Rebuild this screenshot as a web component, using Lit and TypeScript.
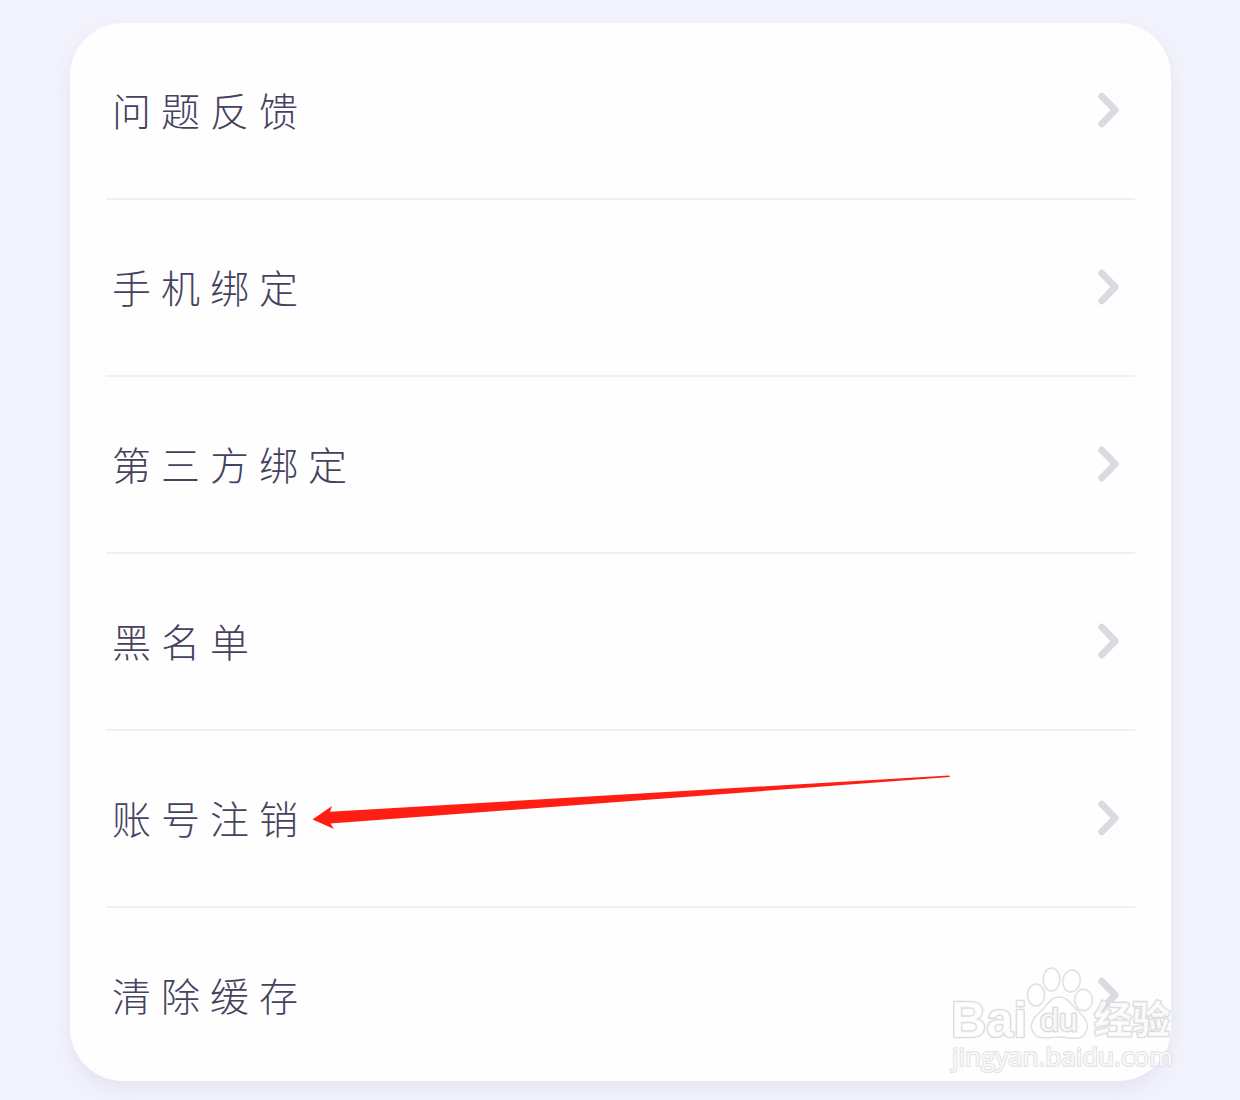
import { LitElement, html, css } from "lit";
import { customElement, property } from "lit/decorators.js";

@customElement("settings-row")
class SettingsRow extends LitElement {
  @property() label = "";

  static styles = css`
    :host {
      display: flex;
      align-items: center;
      justify-content: space-between;
      height: 175px;
      border-bottom: 2px solid #f0f0f2;
    }
    :host(:last-child) {
      border-bottom-color: transparent;
    }
    .label {
      padding: 0 0 4px 6px;
      font-family: "Noto Sans CJK SC", sans-serif;
      font-size: 39px;
      font-weight: 300;
      line-height: 58px;
      letter-spacing: 10px;
      color: #46415f;
      white-space: nowrap;
    }
    .chevron {
      display: block;
      width: 24px;
      height: 38px;
      margin: 0 14px 1px 0;
    }
  `;

  render() {
    return html`
      <span class="label">${this.label}</span>
      <svg class="chevron" viewBox="0 0 24 38" fill="none" stroke="#dadae2" stroke-width="6.8" stroke-linecap="round" stroke-linejoin="round">
        <path d="M4.7 5.2 L18.2 19 L4.7 32.8" />
      </svg>
    `;
  }
}

@customElement("app-root")
class AppRoot extends LitElement {
  private items = ["问题反馈", "手机绑定", "第三方绑定", "黑名单", "账号注销", "清除缓存"];

  static styles = css`
    :host {
      display: block;
    }
    .page {
      position: relative;
      box-sizing: border-box;
      height: 1100px;
      padding: 23px 69px 0 70px;
      overflow: hidden;
      background: #f2f3fc;
    }
    .card {
      box-sizing: border-box;
      height: 1058px;
      padding: 0 36px;
      border-radius: 53px;
      background: #fefefe;
      box-shadow: 0 8px 20px rgba(80, 80, 130, 0.09);
    }
    .arrow {
      position: absolute;
      left: 300px;
      top: 760px;
    }
    .watermark {
      position: absolute;
      left: 930px;
      top: 950px;
    }
    .latin {
      font-family: "Liberation Sans", sans-serif;
    }
    .han {
      font-family: "Noto Sans CJK SC", sans-serif;
      font-weight: 700;
    }
    .url {
      font-family: "Open Sans", sans-serif;
    }
  `;

  render() {
    return html`
      <main class="page">
        <section class="card">
          ${this.items.map((item) => html`<settings-row .label=${item}></settings-row>`)}
        </section>
        <svg class="arrow" width="660" height="80" viewBox="0 0 660 80">
          <path fill="#ff1e14" d="M12.5 59.5 L32 46 L30 51.8 L649 15.5 L650 17 L30.5 63.5 L34 69 Z" />
        </svg>
        <svg class="watermark" width="270" height="150" viewBox="0 0 270 150">
          <g fill="#ffffff" fill-opacity="0.8" stroke="#dfdfdf" stroke-width="1.5" stroke-linejoin="round">
            <ellipse cx="106" cy="45" rx="8.5" ry="11" />
            <ellipse cx="121.5" cy="29.5" rx="8.3" ry="11.5" />
            <ellipse cx="141.5" cy="31" rx="8.7" ry="11" transform="rotate(8 141.5 31)" />
            <ellipse cx="153.5" cy="50" rx="8.8" ry="10.8" />
            <path d="M129 47 C119 47 117 57 108 64 C101 70 100 77 103 82 C108 91 119 87 130 87 C141 87 151 92 156 82 C160 74 155 68 149 62 C141 55 138 47 129 47 Z" />
          </g>
          <g fill="#ffffff" fill-opacity="0.8" stroke="#dcdcdc" paint-order="stroke" stroke-linejoin="round">
            <text class="latin" x="21" y="87" font-size="50" font-weight="700" stroke-width="2.6" textLength="76" lengthAdjust="spacingAndGlyphs">Bai</text>
            <text class="latin" x="110" y="81" font-size="31" font-weight="400" stroke-width="2.8" textLength="38" lengthAdjust="spacingAndGlyphs">du</text>
            <text class="han" x="164" y="83" font-size="38" stroke-width="2.6" textLength="76" lengthAdjust="spacingAndGlyphs">经验</text>
            <text class="url" x="22" y="116" font-size="25" stroke-width="2" stroke="#e2e2e4" textLength="221" lengthAdjust="spacingAndGlyphs">jingyan.baidu.com</text>
          </g>
        </svg>
      </main>
    `;
  }
}
